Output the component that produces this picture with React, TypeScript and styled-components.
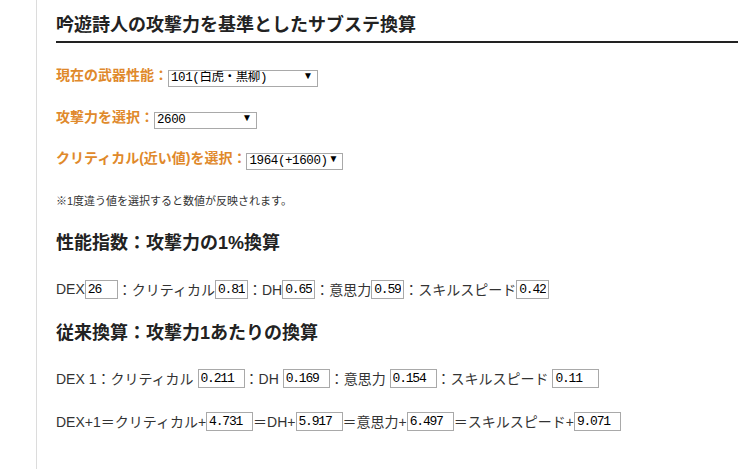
import React from "react";
import styled, { createGlobalStyle } from "styled-components";

const Global = createGlobalStyle`
  html, body { margin: 0; padding: 0; background: #fff; }
  body { font-family: "Liberation Sans", "Noto Sans CJK JP", sans-serif; color: #333; }
`;

const Page = styled.div`
  padding-left: 36px;
  height: 469px;
  overflow: hidden;
`;

const Main = styled.main`
  border-left: 1px solid #dcdcdc;
  padding-left: 19px;
  height: 100%;
  box-sizing: border-box;
  padding-top: 14px;
`;

const Title = styled.h2`
  margin: 0;
  font-size: 18px;
  line-height: 22px;
  font-weight: bold;
  color: #222;
  padding-bottom: 5px;
  border-bottom: 2px solid #222;
`;

const FormRow = styled.div<{ $mt: number }>`
  margin-top: ${(p) => p.$mt}px;
  display: flex;
  align-items: center;
  height: 20px;
`;

const Label = styled.span`
  color: #e0892b;
  font-weight: bold;
  font-size: 14px;
  line-height: 20px;
`;

const SelectWrap = styled.span<{ $w: number }>`
  position: relative;
  display: inline-block;
  width: ${(p) => p.$w}px;
  height: 17px;
`;

const Select = styled.select`
  appearance: none;
  -webkit-appearance: none;
  width: 100%;
  height: 17px;
  border: 1px solid #a9a9a9;
  border-radius: 0;
  background: #fff;
  color: #000;
  font-family: "Liberation Mono", "Noto Sans CJK JP", monospace;
  font-size: 12.5px;
  letter-spacing: -0.4px;
  padding: 0 0 0 2px;
  margin: 0;
  box-sizing: border-box;
  line-height: 15px;
`;

const Arrow = styled.span`
  position: absolute;
  right: 5px;
  top: 3px;
  font-size: 10px;
  line-height: 11px;
  color: #000;
  pointer-events: none;
`;

const Note = styled.p`
  margin: 25px 0 0;
  font-size: 11px;
  line-height: 16px;
  color: #333;
`;

const Heading = styled.h3<{ $mt: number }>`
  margin: ${(p) => p.$mt}px 0 0;
  font-size: 18px;
  line-height: 22px;
  font-weight: bold;
  color: #222;
`;

const DataRow = styled.div<{ $mt: number }>`
  margin-top: ${(p) => p.$mt}px;
  display: flex;
  align-items: center;
  height: 22px;
  font-size: 14px;
  color: #333;
  white-space: pre;
`;

const Box = styled.input<{ $w: number }>`
  width: ${(p) => p.$w}px;
  height: 19px;
  box-sizing: border-box;
  border: 1px solid #a9a9a9;
  padding: 0 2px;
  margin: 0;
  font-family: "Liberation Mono", monospace;
  font-size: 13px;
  letter-spacing: -1.2px;
  color: #000;
  background: #fff;
  outline: none;
`;

const Pick = ({ w, value }: { w: number; value: string }) => (
  <SelectWrap $w={w}>
    <Select defaultValue={value}>
      <option>{value}</option>
    </Select>
    <Arrow>▼</Arrow>
  </SelectWrap>
);

export default function App() {
  return (
    <Page>
      <Global />
      <Main>
        <Title>吟遊詩人の攻撃力を基準としたサブステ換算</Title>
        <FormRow $mt={22}>
          <Label>現在の武器性能：</Label>
          <Pick w={150} value="101(白虎・黒柳)" />
        </FormRow>
        <FormRow $mt={22}>
          <Label>攻撃力を選択：</Label>
          <Pick w={103} value="2600" />
        </FormRow>
        <FormRow $mt={21}>
          <Label>クリティカル(近い値)を選択：</Label>
          <Pick w={97} value="1964(+1600)" />
        </FormRow>
        <Note>※1度違う値を選択すると数値が反映されます。</Note>
        <Heading $mt={23}>性能指数：攻撃力の1%換算</Heading>
        <DataRow $mt={24}>
          DEX<Box $w={33} defaultValue="26" />：クリティカル<Box $w={33} defaultValue="0.81" />：DH<Box $w={33} defaultValue="0.65" />：意思力<Box $w={33} defaultValue="0.59" />：スキルスピード<Box $w={33} defaultValue="0.42" />
        </DataRow>
        <Heading $mt={22}>従来換算：攻撃力1あたりの換算</Heading>
        <DataRow $mt={23}>
          DEX 1：クリティカル <Box $w={47} defaultValue="0.211" />：DH <Box $w={47} defaultValue="0.169" />：意思力 <Box $w={47} defaultValue="0.154" />：スキルスピード <Box $w={47} defaultValue="0.11" />
        </DataRow>
        <DataRow $mt={21}>
          DEX+1＝クリティカル+<Box $w={47} defaultValue="4.731" />＝DH+<Box $w={47} defaultValue="5.917" />＝意思力+<Box $w={47} defaultValue="6.497" />＝スキルスピード+<Box $w={47} defaultValue="9.071" />
        </DataRow>
      </Main>
    </Page>
  );
}
